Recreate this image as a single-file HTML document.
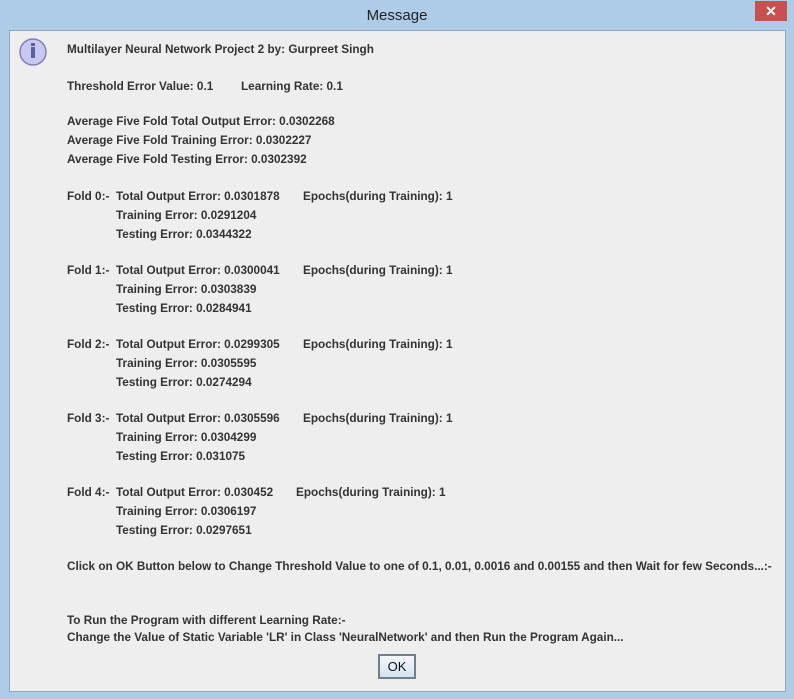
<!DOCTYPE html>
<html><head><style>
body{margin:0;width:794px;height:699px;background:#aecbe8;position:relative;overflow:hidden;font-family:"Liberation Sans",Arial,sans-serif}
#title{position:absolute;top:0;left:0;width:794px;height:30px;text-align:center;line-height:32px;font-size:15px;color:#222}
#close{position:absolute;left:755px;top:1px;width:32px;height:20px;background:#c75050;color:#fff;text-align:center;font-size:14px;line-height:20px;font-weight:bold}
#content{position:absolute;left:9px;top:30px;width:775px;height:660px;background:#eeeeee;border:1px solid #8ea6be}
.t{position:absolute;margin-top:1px;font-size:11.75px;font-weight:bold;color:#333;white-space:nowrap;line-height:14px}
#ok{position:absolute;left:378px;top:654px;width:34px;height:21px;border:2px solid #707f8c;background:linear-gradient(#f4f8fc,#d4e2f0);font-size:13px;text-align:center;line-height:21px;color:#111}
</style></head><body>
<div id="title">Message</div>
<div id="close">✕</div>
<div id="content"></div>
<svg style="position:absolute;left:18px;top:38px" width="32" height="32"><circle cx="15" cy="14" r="13" fill="#c8c8f0" stroke="#8080b8" stroke-width="1.5"/><rect x="13" y="9" width="4" height="11" fill="#6060a0"/><rect x="13" y="5" width="4" height="3" fill="#6060a0"/></svg>
<div class="t" style="left:67px;top:42px">Multilayer Neural Network Project 2 by: Gurpreet Singh</div>
<div class="t" style="left:67px;top:79px">Threshold Error Value: 0.1</div>
<div class="t" style="left:241px;top:79px">Learning Rate: 0.1</div>
<div class="t" style="left:67px;top:114px">Average Five Fold Total Output Error: 0.0302268</div>
<div class="t" style="left:67px;top:133px">Average Five Fold Training Error: 0.0302227</div>
<div class="t" style="left:67px;top:152px">Average Five Fold Testing Error: 0.0302392</div>

<div class="t" style="left:67px;top:189px">Fold 0:-</div><div class="t" style="left:116px;top:189px">Total Output Error: 0.0301878</div><div class="t" style="left:303px;top:189px">Epochs(during Training): 1</div>
<div class="t" style="left:116px;top:208px">Training Error: 0.0291204</div>
<div class="t" style="left:116px;top:227px">Testing Error: 0.0344322</div>

<div class="t" style="left:67px;top:263px">Fold 1:-</div><div class="t" style="left:116px;top:263px">Total Output Error: 0.0300041</div><div class="t" style="left:303px;top:263px">Epochs(during Training): 1</div>
<div class="t" style="left:116px;top:282px">Training Error: 0.0303839</div>
<div class="t" style="left:116px;top:301px">Testing Error: 0.0284941</div>

<div class="t" style="left:67px;top:337px">Fold 2:-</div><div class="t" style="left:116px;top:337px">Total Output Error: 0.0299305</div><div class="t" style="left:303px;top:337px">Epochs(during Training): 1</div>
<div class="t" style="left:116px;top:356px">Training Error: 0.0305595</div>
<div class="t" style="left:116px;top:375px">Testing Error: 0.0274294</div>

<div class="t" style="left:67px;top:411px">Fold 3:-</div><div class="t" style="left:116px;top:411px">Total Output Error: 0.0305596</div><div class="t" style="left:303px;top:411px">Epochs(during Training): 1</div>
<div class="t" style="left:116px;top:430px">Training Error: 0.0304299</div>
<div class="t" style="left:116px;top:449px">Testing Error: 0.031075</div>

<div class="t" style="left:67px;top:485px">Fold 4:-</div><div class="t" style="left:116px;top:485px">Total Output Error: 0.030452</div><div class="t" style="left:296px;top:485px">Epochs(during Training): 1</div>
<div class="t" style="left:116px;top:504px">Training Error: 0.0306197</div>
<div class="t" style="left:116px;top:523px">Testing Error: 0.0297651</div>

<div class="t" style="left:67px;top:559px">Click on OK Button below to Change Threshold Value to one of 0.1, 0.01, 0.0016 and 0.00155 and then Wait for few Seconds...:-</div>
<div class="t" style="left:67px;top:613px">To Run the Program with different Learning Rate:-</div>
<div class="t" style="left:67px;top:630px">Change the Value of Static Variable 'LR' in Class 'NeuralNetwork' and then Run the Program Again...</div>
<div id="ok">OK</div>
</body></html>
